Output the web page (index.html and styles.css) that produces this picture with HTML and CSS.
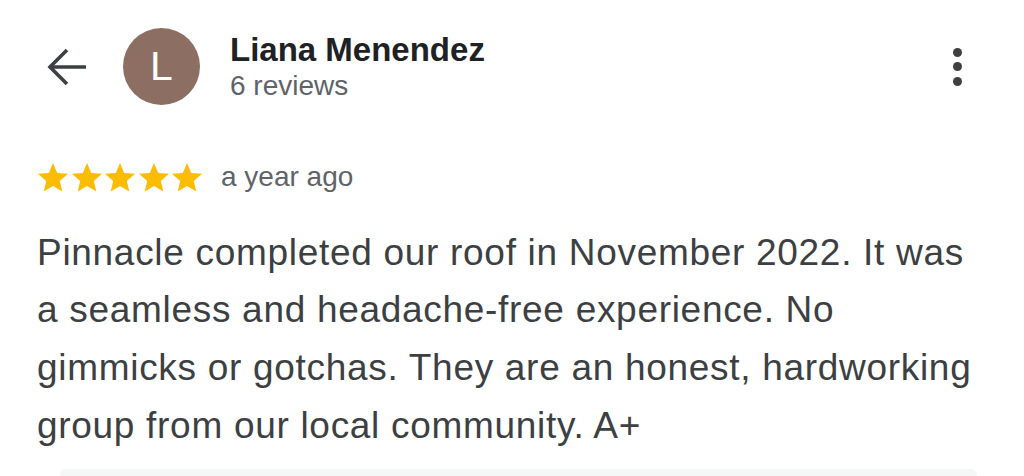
FILE: index.html
```html
<!DOCTYPE html>
<html lang="en">
<head>
<meta charset="utf-8">
<title>Review</title>
<link rel="stylesheet" href="styles.css">
</head>
<body>
<div class="page">
  <header class="header">
    <svg class="back" viewBox="0 0 40 40" aria-label="Back">
      <path d="M39 20H4" />
      <path d="M20 3L3 20L20 37" />
    </svg>
    <div class="avatar">L</div>
    <div class="info">
      <div class="name">Liana Menendez</div>
      <div class="count">6 reviews</div>
    </div>
    <div class="menu" aria-label="More">
      <span class="dot"></span><span class="dot"></span><span class="dot"></span>
    </div>
  </header>

  <div class="meta">
    <div class="stars">
      <svg class="star" viewBox="2 2 20 19"><path d="M12 17.27L18.18 21l-1.64-7.03L22 9.24l-7.19-.61L12 2 9.19 8.63 2 9.24l5.46 4.73L5.82 21z"/></svg>
      <svg class="star" viewBox="2 2 20 19"><path d="M12 17.27L18.18 21l-1.64-7.03L22 9.24l-7.19-.61L12 2 9.19 8.63 2 9.24l5.46 4.73L5.82 21z"/></svg>
      <svg class="star" viewBox="2 2 20 19"><path d="M12 17.27L18.18 21l-1.64-7.03L22 9.24l-7.19-.61L12 2 9.19 8.63 2 9.24l5.46 4.73L5.82 21z"/></svg>
      <svg class="star" viewBox="2 2 20 19"><path d="M12 17.27L18.18 21l-1.64-7.03L22 9.24l-7.19-.61L12 2 9.19 8.63 2 9.24l5.46 4.73L5.82 21z"/></svg>
      <svg class="star" viewBox="2 2 20 19"><path d="M12 17.27L18.18 21l-1.64-7.03L22 9.24l-7.19-.61L12 2 9.19 8.63 2 9.24l5.46 4.73L5.82 21z"/></svg>
    </div>
    <span class="time">a year ago</span>
  </div>

  <p class="text">Pinnacle completed our roof in November 2022. It was<br>a seamless and headache-free experience. No<br>gimmicks or gotchas. They are an honest, hardworking<br>group from our local community. A+</p>

  <div class="bar"></div>
</div>
</body>
</html>
```

FILE: styles.css
```css
html, body {
  margin: 0;
  padding: 0;
  background: #ffffff;
}

body {
  font-family: "Liberation Sans", Arial, Helvetica, sans-serif;
  overflow: hidden;
}

.page {
  width: 1024px;
  height: 476px;
  overflow: hidden;
}

.header {
  display: flex;
  align-items: flex-start;
  padding: 28px 62px 0 47px;
}

.back {
  width: 40px;
  height: 40px;
  margin-top: 19px;
  flex: none;
  fill: none;
  stroke: #3c4043;
  stroke-width: 3.6;
}

.avatar {
  width: 77px;
  height: 77px;
  margin-left: 36px;
  border-radius: 50%;
  background: #8d6e63;
  color: #ffffff;
  font-size: 41px;
  line-height: 77px;
  text-align: center;
  flex: none;
}

.info {
  margin-left: 30px;
  margin-top: 3px;
}

.name {
  font-size: 33px;
  line-height: 38px;
  font-weight: 700;
  color: #202124;
}

.count {
  font-size: 28px;
  line-height: 34px;
  color: #5f6368;
}

.menu {
  margin-left: auto;
  align-self: center;
  display: flex;
  flex-direction: column;
  gap: 5.5px;
}

.dot {
  width: 9px;
  height: 9px;
  border-radius: 50%;
  background: #3c4043;
}

.meta {
  display: flex;
  align-items: flex-start;
  margin-top: 58px;
  padding-left: 38px;
}

.stars {
  display: flex;
  gap: 3.5px;
}

.star {
  width: 30px;
  height: 28.5px;
  fill: #fbbc04;
}

.time {
  margin-left: 19px;
  margin-top: 0;
  font-size: 28px;
  line-height: 28px;
  color: #5f6368;
}

.text {
  margin: 32px 0 0 0;
  padding-left: 37px;
  font-size: 37px;
  line-height: 57.7px;
  letter-spacing: 0.7px;
  color: #3c4043;
  white-space: nowrap;
}

.bar {
  margin: 15px 47px 0 60px;
  height: 12px;
  border-radius: 6px 6px 0 0;
  background: #f5f7f7;
}
```
